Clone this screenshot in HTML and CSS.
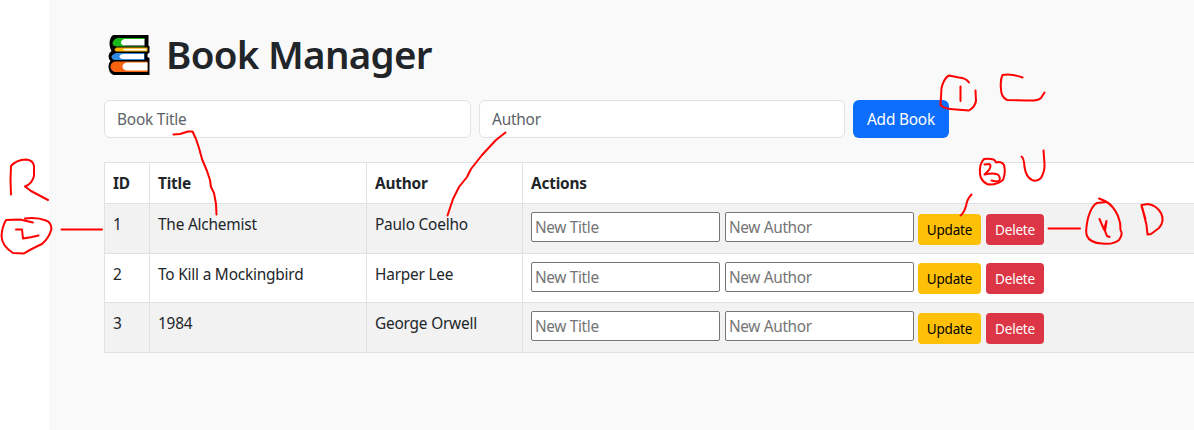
FILE: index.html
```html
<!DOCTYPE html>
<html lang="en">
<head>
<meta charset="utf-8">
<title>Book Manager</title>
<link rel="stylesheet" href="styles.css">
</head>
<body>
<main class="page">
  <h1 class="heading">
    <svg class="books" viewBox="0 0 42 40" aria-hidden="true">
      <path fill="#000" d="M5 0H40V11H41V17.500L39 19V22L41 23V40H5Q0 38 0 31Q0 28 2 26Q0 24 0 21Q0 18 3 16Q1 13 1 7Q2 1 5 0Z"/>
      <path fill="#16b916" d="M9 3H36V5H16V11H36V11.500H8Q4 11 4 8Q5 4 9 3Z"/>
      <path fill="#fff" d="M16 4H36V10.500H16Q12.500 10 12.500 7.500Q12.500 5 16 4Z"/>
      <path fill="#ffb400" d="M8 12.500H39V16.500H8Q4 15 8 12.500Z"/>
      <path fill="#fff" d="M16 13.800H38V15.500H16Q13 15 16 13.800Z"/>
      <path fill="#318be0" d="M8 18H36V25H6Q3 24 3 21.500Q4 19 8 18Z"/>
      <path fill="#fff" d="M15 19H35.500V24H15Q11 23.500 11 21.500Q11 19.500 15 19Z"/>
      <path fill="#f9620e" d="M6 26.500H39V37H6Q2 35 2 31.500Q2 28 6 26.500Z"/>
      <path fill="#fff" d="M18 27.500H39V35.500H18Q14 34.500 14 31.500Q14 28.500 18 27.500Z"/>
    </svg>
    <span class="heading-text">Book Manager</span>
  </h1>
  <form class="add-form">
    <input class="field" placeholder="Book Title">
    <input class="field field-author" placeholder="Author">
    <button class="add" type="button">Add Book</button>
  </form>
  <table class="table">
    <colgroup><col class="col-id"><col class="col-title"><col class="col-author"><col class="col-actions"></colgroup>
    <thead>
      <tr><th>ID</th><th>Title</th><th>Author</th><th>Actions</th></tr>
    </thead>
    <tbody>
      <tr class="odd">
        <td>1</td><td>The Alchemist</td><td>Paulo Coelho</td>
        <td><div class="actions"><input class="edit" placeholder="New Title"><input class="edit" placeholder="New Author"><button class="btn update" type="button">Update</button><button class="btn delete" type="button">Delete</button></div></td>
      </tr>
      <tr class="even">
        <td>2</td><td>To Kill a Mockingbird</td><td>Harper Lee</td>
        <td><div class="actions"><input class="edit" placeholder="New Title"><input class="edit" placeholder="New Author"><button class="btn update" type="button">Update</button><button class="btn delete" type="button">Delete</button></div></td>
      </tr>
      <tr class="odd">
        <td>3</td><td>1984</td><td>George Orwell</td>
        <td><div class="actions"><input class="edit" placeholder="New Title"><input class="edit" placeholder="New Author"><button class="btn update" type="button">Update</button><button class="btn delete" type="button">Delete</button></div></td>
      </tr>
    </tbody>
  </table>
</main>
<svg class="ink" viewBox="0 0 1194 430" aria-hidden="true">
  <!-- connectors -->
  <path d="M173.500 134.500L180 134L188 131.500L192.500 131.500L196 139L199 148L202 159L207 171L210 180L211 187L214 193L216 204L216.500 214.500"/>
  <path d="M505.500 132.500L496 140L482 155L471 169L467 177L459 187L453 199L450 208L447.500 215.500"/>
  <path d="M61.500 229.500H102"/>
  <path d="M971.500 194.500Q967 199 966 206Q964 213 960.500 215.500"/>
  <path d="M1048.500 228.500H1080"/>
  <!-- R, 2 -->
  <path d="M11 194.500L10.500 180L11 166Q16 160 26 159.500Q33 160 34 166L34 176Q32 184 25 186.500L31 191L48 200"/>
  <path d="M33 222.500L20 219.500L6 220Q2 227 1.500 236Q2 246 13 253L24 253.500Q31 249 42 244Q49 238 51.500 229Q51 222 46 220.500Q37 217 25 218.500"/>
  <path d="M16 229.500L22 229.500L23 238.500L32 237L38.500 235.500"/>
  <!-- 1, C -->
  <path d="M969 82.500Q966 78 959 77.500L949 75.500Q944 78 941.500 88L940.500 105Q944 109 956 109.500L969 110.500Q975 107 976 101L975.500 90.500"/>
  <path d="M960.500 86.500V101"/>
  <path d="M1022.500 77.500Q1011 73 1002.500 75Q1000 80 1001 89Q1001 97 1007 100L1027 100.500Q1038 101 1041 98L1044.500 92.500"/>
  <!-- 3, U -->
  <path d="M995.500 161.500Q994 158 984 159Q979 164 980 174Q981 181 987 184Q995 186 1003 180Q1006 172 1004 165Q1001 161 996 162.500"/>
  <path d="M984.500 164.500L989 164Q992 165 989 170L984.500 174.500Q997 172 999 176Q1002 181 996 181.500L991.500 180.500"/>
  <path d="M1021.500 156.500Q1024 158 1024.500 167Q1026 177 1032 180Q1037 182 1041 178Q1045 171 1044.500 164L1043.500 150.500"/>
  <!-- 4, D -->
  <path d="M1099 198.500L1105 201Q1113 205 1118 216Q1121 223 1120.500 230M1106 202L1097 203Q1092 205 1088 218Q1085 232 1087 236Q1090 243 1102 243.500Q1113 245 1119 240Q1123 234 1121 231"/>
  <path d="M1099.500 219L1104 229.500L1106.500 221L1105 231L1107 236L1109.500 237"/>
  <path d="M1141.500 206L1144 215L1146.500 225L1147.500 234.500L1151 234L1159 228Q1165 221 1161 213Q1156 205 1148 204L1141.500 205L1145.500 219"/>
</svg>
</body>
</html>
```
FILE: styles.css
```css
* { box-sizing: border-box; }
html, body { height: 100%; }
body {
  margin: 0;
  overflow: hidden;
  background: #fff;
  color: #212529;
  font-family: "Noto Sans", sans-serif;
  font-size: 15.4px;
  line-height: 24px;
  letter-spacing: -0.2px;
}
.page {
  height: 430px;
  margin-left: 49px;
  padding: 30px 0 0 55px;
  background: #f9f9f9;
  overflow: hidden;
}
.heading {
  display: flex;
  height: 48px;
  margin: 0 0 22px;
  padding-left: 4px;
  font-size: 38.5px;
  font-weight: 560;
  line-height: 48px;
  letter-spacing: -0.7px;
}
.books { width: 43px; height: 40px; margin: 5px 15px 0 0; }
.add-form { display: flex; gap: 8px; margin-bottom: 24px; }
input, button { font-family: inherit; letter-spacing: inherit; margin: 0; }
.field {
  width: 367px;
  height: 38px;
  padding: 1px 12px 0;
  border: 1px solid #dee2e6;
  border-radius: 6px;
  background: #fff;
  font-size: 15.4px;
}
.field-author { width: 366px; }
.field::placeholder { color: #5c6268; opacity: 1; }
.add {
  width: 96px;
  height: 38px;
  padding: 1px 0 0;
  border: 0;
  border-radius: 6px;
  background: #0d6efd;
  color: #fff;
  font-size: 15.4px;
}
.table {
  width: 1174px;
  table-layout: fixed;
  border-collapse: separate;
  border-spacing: 0;
  border: solid #dee2e6;
  border-width: 1px 0 0 1px;
  background: #fff;
}
.col-id { width: 45px; }
.col-title { width: 217px; }
.col-author { width: 156px; }
th, td {
  padding: 8px 8px 6px;
  border: solid #dee2e6;
  border-width: 0 1px 1px 0;
  line-height: 26px;
  text-align: left;
  vertical-align: top;
}
th { height: 41px; font-weight: 700; }
.odd td { height: 50px; background: #f2f2f2; }
.even td { height: 49px; }
.actions { display: flex; height: 32px; }
.edit {
  width: 189px;
  height: 30px;
  margin-right: 5px;
  padding: 1px 3px;
  border: 1px solid #767676;
  border-radius: 2px;
  background: #fff;
  font-size: 15.4px;
  letter-spacing: -0.35px;
}
.edit + .edit { margin-right: 4px; }
.edit::placeholder { color: #757575; opacity: 1; }
.btn {
  height: 31px;
  margin-top: 2px;
  padding: 1px 0 0;
  border: 0;
  border-radius: 4px;
  font-size: 13.5px;
}
.even .btn { margin-top: 1px; }
.update { width: 63px; margin-right: 5px; background: #ffc107; color: #000; }
.delete { width: 58px; background: #dc3545; color: #fff; }
.ink {
  position: absolute;
  top: 0;
  left: 0;
  width: 1194px;
  height: 430px;
  fill: none;
  stroke: #f00;
  stroke-width: 2;
  stroke-linecap: round;
  stroke-linejoin: round;
  pointer-events: none;
}
```
